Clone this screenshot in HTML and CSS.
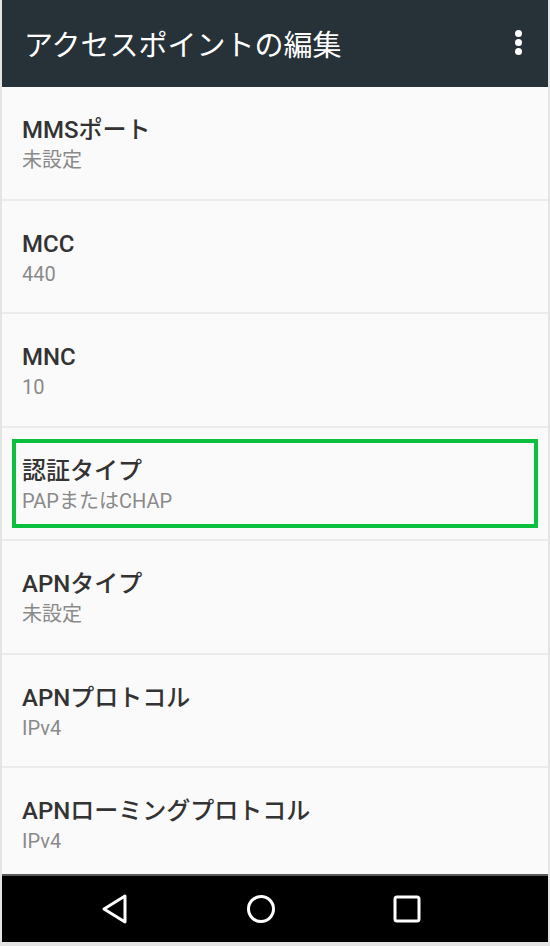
FILE: index.html
```html
<!DOCTYPE html>
<html lang="ja">
<head>
  <meta charset="UTF-8">
  <title>アクセスポイントの編集</title>
  <link rel="stylesheet" href="styles.css">
</head>
<body>
  <div class="phone">
    <header class="toolbar">
      <h1 class="toolbar-title">アクセスポイントの編集</h1>
      <span class="menu-dots"><i></i><i></i><i></i></span>
    </header>

    <ul class="prefs">
      <li class="pref">
        <div class="pref-title">MMSポート</div>
        <div class="pref-summary">未設定</div>
      </li>
      <li class="pref">
        <div class="pref-title">MCC</div>
        <div class="pref-summary">440</div>
      </li>
      <li class="pref">
        <div class="pref-title">MNC</div>
        <div class="pref-summary">10</div>
      </li>
      <li class="pref highlight">
        <div class="pref-title">認証タイプ</div>
        <div class="pref-summary">PAPまたはCHAP</div>
      </li>
      <li class="pref">
        <div class="pref-title">APNタイプ</div>
        <div class="pref-summary">未設定</div>
      </li>
      <li class="pref">
        <div class="pref-title">APNプロトコル</div>
        <div class="pref-summary">IPv4</div>
      </li>
      <li class="pref">
        <div class="pref-title">APNローミングプロトコル</div>
        <div class="pref-summary">IPv4</div>
      </li>
    </ul>

    <nav class="navbar">
      <svg class="nav-icon" width="30" height="32" viewBox="0 0 30 32">
        <path d="M25 3 L4 16 L25 29 Z" fill="none" stroke="#fff" stroke-width="3" stroke-linejoin="round"/>
      </svg>
      <svg class="nav-icon" width="32" height="32" viewBox="0 0 32 32">
        <circle cx="16" cy="16" r="12.5" fill="none" stroke="#fff" stroke-width="3"/>
      </svg>
      <svg class="nav-icon" width="30" height="30" viewBox="0 0 30 30">
        <rect x="3" y="3" width="24" height="24" rx="2" fill="none" stroke="#fff" stroke-width="3"/>
      </svg>
    </nav>
  </div>
</body>
</html>
```

FILE: styles.css
```css
body {
  margin: 0;
  background-color: #e4e4e4;
  font-family: Roboto, "Noto Sans CJK JP", sans-serif;
}

.phone {
  width: 546px;
  height: 942px;
  margin: 0 2px;
  display: flex;
  flex-direction: column;
  background-color: #fafafa;
  overflow: hidden;
}

.toolbar {
  height: 87px;
  flex-shrink: 0;
  display: flex;
  align-items: center;
  justify-content: space-between;
  padding: 0 26px 0 22px;
  background-color: #263238;
  box-sizing: border-box;
}

.toolbar-title {
  margin: 0 0 2px 0;
  color: #fff;
  font-size: 29px;
  font-weight: 400;
}

.menu-dots {
  display: flex;
  flex-direction: column;
  gap: 2px;
  margin-bottom: 2px;
}

.menu-dots i {
  display: block;
  width: 7px;
  height: 7px;
  border-radius: 50%;
  background-color: #fff;
}

.prefs {
  flex: 1;
  margin: 0;
  padding: 0;
  list-style: none;
  overflow: hidden;
}

.pref {
  position: relative;
  height: 113.5px;
  padding: 29px 20px 0 20px;
  border-bottom: 2px solid #ebebeb;
  box-sizing: border-box;
}

.pref-title {
  font-size: 24px;
  line-height: 28px;
  font-weight: 500;
  color: #333;
}

.pref-summary {
  margin-top: 4px;
  font-size: 20px;
  line-height: 24px;
  color: #8a8a8a;
}

.highlight::after {
  content: "";
  position: absolute;
  left: 10px;
  right: 10px;
  top: 11px;
  bottom: 11px;
  border: 4px solid #0cbf3f;
}

.navbar {
  height: 66px;
  flex-shrink: 0;
  display: flex;
  align-items: center;
  justify-content: space-between;
  padding: 0 126px 0 98px;
  background-color: #000;
  border-top: 2px solid #5a5a5a;
}
```
